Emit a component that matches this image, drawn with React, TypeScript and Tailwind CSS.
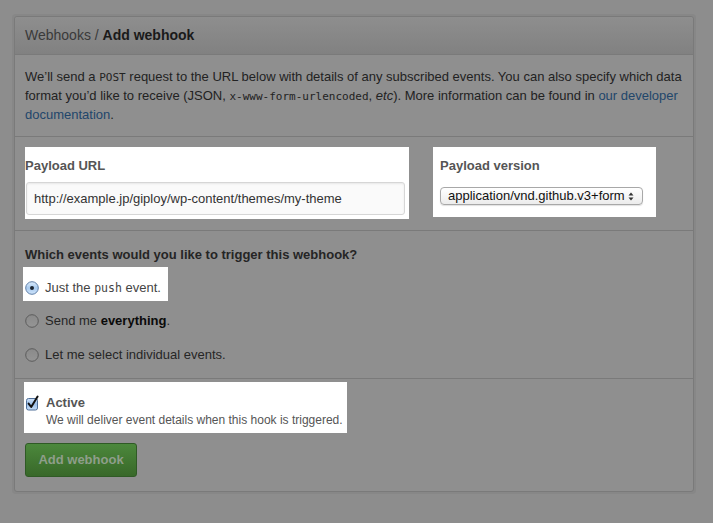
import React from "react";

function RadioOn() {
  return (
    <svg width="14" height="14" viewBox="0 0 14 14" className="shrink-0">
      <defs>
        <linearGradient id="ron" x1="0" y1="0" x2="0" y2="1">
          <stop offset="0" stopColor="#dcebfa" />
          <stop offset="0.5" stopColor="#a9cbef" />
          <stop offset="1" stopColor="#cfe4fb" />
        </linearGradient>
      </defs>
      <circle cx="7" cy="7" r="6.3" fill="url(#ron)" stroke="#5f7fa8" strokeWidth="1" />
      <circle cx="7" cy="7" r="2" fill="#1b2430" />
    </svg>
  );
}

function RadioOff() {
  return (
    <svg width="14" height="14" viewBox="0 0 14 14" className="shrink-0">
      <defs>
        <linearGradient id="roff" x1="0" y1="0" x2="0" y2="1">
          <stop offset="0" stopColor="#8a8a8a" />
          <stop offset="1" stopColor="#959595" />
        </linearGradient>
      </defs>
      <circle cx="7" cy="7" r="6.3" fill="url(#roff)" stroke="#5c5c5c" strokeWidth="1" />
    </svg>
  );
}

function CheckOn() {
  return (
    <svg width="14" height="16" viewBox="0 0 14 16" className="shrink-0 overflow-visible">
      <defs>
        <linearGradient id="con" x1="0" y1="0" x2="0" y2="1">
          <stop offset="0" stopColor="#cfe2f8" />
          <stop offset="0.5" stopColor="#9cc0ea" />
          <stop offset="1" stopColor="#c5ddf8" />
        </linearGradient>
      </defs>
      <rect x="0.5" y="3.5" width="11" height="11.5" rx="2" fill="url(#con)" stroke="#4f6f98" strokeWidth="1" />
      <path d="M2.6 8.6 L5.2 12 L11.6 1.6" fill="none" stroke="#111" strokeWidth="2" strokeLinecap="round" strokeLinejoin="round" />
    </svg>
  );
}

export default function App() {
  return (
    <div className="min-h-[523px] w-[713px] bg-[#8d8d8d] pt-[14px] pl-[12px] font-['Liberation_Sans',Arial,sans-serif]">
      <div className="w-[684px] rounded-[4px] bg-[#878787] p-[2px]">
        <div className="rounded-[3px] border border-[#7a7a7a] bg-[#8f8f8f]">
          <div className="flex h-[38px] items-center rounded-t-[3px] border-b border-[#7a7a7a] bg-gradient-to-b from-[#8e8e8e] to-[#818181] px-[10px] text-[14px]">
            <span className="text-[#3a3a3a]">Webhooks /&nbsp;</span>
            <span className="font-bold text-[#1a1a1a]">Add webhook</span>
          </div>

          <div className="border-b border-[#7a7a7a] px-[10px] pt-[13px] pb-[12px] text-[13px] leading-[18px] text-[#222]">
            <div className="whitespace-nowrap">
              We&rsquo;ll send a{" "}
              <code className="font-['DejaVu_Sans_Mono',monospace] text-[11px]">POST</code>{" "}
              request to the URL below with details of any subscribed events. You can also specify which data
            </div>
            <div className="whitespace-nowrap">
              format you&rsquo;d like to receive (JSON,{" "}
              <code className="font-['DejaVu_Sans_Mono',monospace] text-[11px]">x-www-form-urlencoded</code>,{" "}
              <em>etc</em>). More information can be found in{" "}
              <span className="text-[#22466b]">our developer</span>
            </div>
            <div className="whitespace-nowrap">
              <span className="text-[#22466b]">documentation</span>.
            </div>
          </div>

          <div className="flex items-start gap-[24px] border-b border-[#7a7a7a] px-[10px] pt-[10px] pb-[11px]">
            <div className="w-[384px] bg-white pt-[10px] pr-[4px] pb-[4px]">
              <div className="mb-[7px] text-[13px] font-bold leading-[18px] text-[#555]">Payload URL</div>
              <div className="ml-px flex h-[33px] w-[379px] items-center rounded-[3px] border border-[#d6d6d6] bg-[#fafafa] pl-[7px] text-[13px] text-[#333] shadow-[inset_0_1px_2px_rgba(0,0,0,0.075)]">
                http://example.jp/giploy/wp-content/themes/my-theme
              </div>
            </div>
            <div className="w-[223px] bg-white pt-[10px] pb-[12px] pl-[7px] pr-[13px]">
              <div className="mb-[12px] text-[13px] font-bold leading-[18px] text-[#555]">Payload version</div>
              <div className="relative flex h-[18px] w-[203px] items-center rounded-[4px] border border-[#a8a8a8] bg-gradient-to-b from-white to-[#ececec] pl-[7px] text-[13px] text-[#111] shadow-[0_1px_1px_rgba(0,0,0,0.12)]">
                application/vnd.github.v3+form
                <svg width="6" height="9" viewBox="0 0 6 9" className="absolute right-[8px] top-[4px]">
                  <path d="M0.5 3.5 L3 0.5 L5.5 3.5 Z" fill="#333" />
                  <path d="M0.5 5.5 L3 8.5 L5.5 5.5 Z" fill="#333" />
                </svg>
              </div>
            </div>
          </div>

          <div className="border-b border-[#7a7a7a] px-[10px] pt-[15px] pb-[14px]">
            <div className="text-[13px] font-bold leading-[18px] text-[#252525]">
              Which events would you like to trigger this webhook?
            </div>
            <div className="mt-[3px] ml-[-2px] flex w-[145px] items-center gap-[6px] bg-white pt-[12px] pb-[4px] pl-[2px] text-[13px] leading-[18px] text-[#444]">
              <RadioOn />
              <span className="whitespace-nowrap">
                Just the <code className="font-['DejaVu_Sans_Mono',monospace] text-[11.5px]">push</code> event.
              </span>
            </div>
            <div className="mt-[11px] flex items-center gap-[6px] text-[13px] leading-[18px] text-[#262626]">
              <RadioOff />
              <span>
                Send me <b className="text-[#0a0a0a]">everything</b>.
              </span>
            </div>
            <div className="mt-[16px] flex items-center gap-[6px] text-[13px] leading-[18px] text-[#262626]">
              <RadioOff />
              <span>Let me select individual events.</span>
            </div>
          </div>

          <div className="px-[10px] pt-[3px] pb-[14px]">
            <div className="ml-[-1px] flex w-[323px] items-start gap-[6px] bg-white pt-[12px] pb-[4px] pl-[2px]">
              <div className="pt-[1px]">
                <CheckOn />
              </div>
              <div>
                <div className="text-[13px] font-bold leading-[18px] text-[#555]">Active</div>
                <div className="whitespace-nowrap text-[12px] leading-[17px] text-[#555]">
                  We will deliver event details when this hook is triggered.
                </div>
              </div>
            </div>
            <button className="mt-[10px] flex h-[34px] w-[112px] items-center justify-center rounded-[3px] border border-[#2f5a25] bg-gradient-to-b from-[#4c883c] to-[#386829] text-[13px] font-bold text-[#8f9e8b]">
              Add webhook
            </button>
          </div>
        </div>
      </div>
    </div>
  );
}
